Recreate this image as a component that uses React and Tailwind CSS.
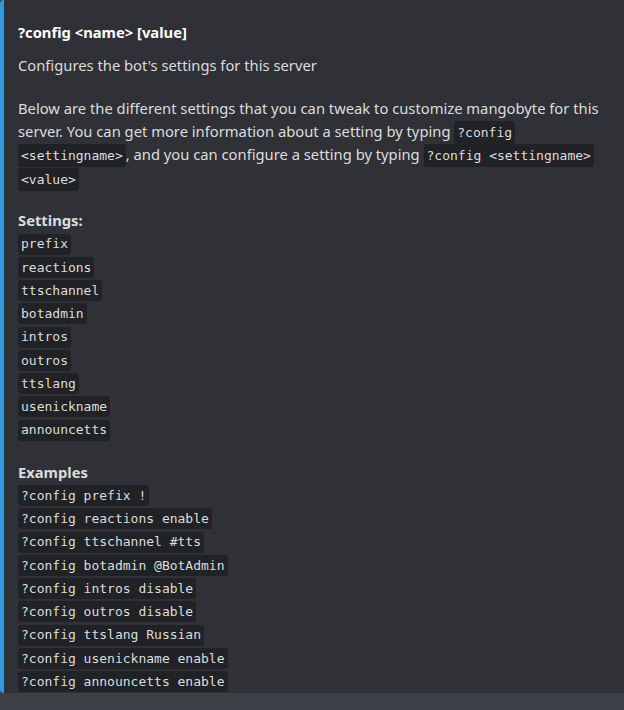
import React from "react";

const settings = ["prefix","reactions","ttschannel","botadmin","intros","outros","ttslang","usenickname","announcetts"];
const examples = [
  "?config prefix !",
  "?config reactions enable",
  "?config ttschannel #tts",
  "?config botadmin @BotAdmin",
  "?config intros disable",
  "?config outros disable",
  "?config ttslang Russian",
  "?config usenickname enable",
  "?config announcetts enable",
];

function Code({ children }) {
  return (
    <code className="rounded-[3px] bg-[#202225] px-[3px] py-[4px] text-[13px] leading-none text-[#dcddde] [box-decoration-break:clone] [font-family:'DejaVu_Sans_Mono',monospace]">
      {children}
    </code>
  );
}

function CodeLine({ children }) {
  return (
    <div className="flex h-[23.25px] items-center">
      <span className="inline-flex h-[21px] items-center rounded-[3px] bg-[#202225] px-[3px] text-[13px] text-[#dcddde] [font-family:'DejaVu_Sans_Mono',monospace]">
        {children}
      </span>
    </div>
  );
}

export default function App() {
  return (
    <div className="flex h-[710px] w-[624px] flex-col bg-[#3d4147] [font-family:'Noto_Sans',sans-serif]">
      <div className="h-[693px] rounded-tl-[4px] rounded-bl-[4px] border-l-[4px] border-[#3498db] bg-[#2f3136] pl-[14px] pr-[16px] pt-[21px]">
        <div className="text-[14.75px] font-bold leading-[22px] text-white">?config &lt;name&gt; [value]</div>
        <div className="mt-[11px] text-[14.75px] leading-[23.25px] text-[#dcddde]">
          Configures the bot's settings for this server
        </div>
        <div className="mt-[19.5px] text-[14.75px] leading-[23.25px] text-[#dcddde]">
          Below are the different settings that you can tweak to customize mangobyte for this server. You can get more information about a setting by typing <Code>?config &lt;settingname&gt;</Code>, and you can configure a setting by typing <Code>?config &lt;settingname&gt; &lt;value&gt;</Code>
        </div>
        <div className="mt-[19.5px] text-[14.75px] font-bold leading-[23.25px] text-[#dcddde]">Settings:</div>
        {settings.map((s) => (
          <CodeLine key={s}>{s}</CodeLine>
        ))}
        <div className="mt-[19px] text-[14.75px] font-bold leading-[23.25px] text-[#dcddde]">Examples</div>
        {examples.map((s) => (
          <CodeLine key={s}>{s}</CodeLine>
        ))}
      </div>
    </div>
  );
}
